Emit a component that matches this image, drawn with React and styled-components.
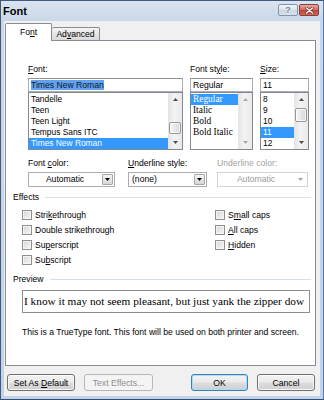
import React from 'react';
import styled, { createGlobalStyle } from 'styled-components';

const SANS = '"Liberation Sans", Arial, sans-serif';
const SERIF = '"Liberation Serif", "Times New Roman", serif';

const Global = createGlobalStyle`
  html, body { margin: 0; padding: 0; background: #ffffff; }
  body { font-family: ${SANS}; font-size: 8.6px; color: #000; }
  * { box-sizing: border-box; }
`;

const Window = styled.div`
  width: 324px;
  height: 400px;
  border: 1px solid #3d5a80;
  border-right: 1px solid #4f79b0;
  border-bottom: 1px solid #2f4f7c;
  background: linear-gradient(#dbe4ef, #c9d7e8 20px, #c3d2e5);
  display: flex;
  flex-direction: column;
  overflow: hidden;
`;

const TitleBar = styled.div`
  height: 20px;
  flex: none;
  display: flex;
  align-items: center;
  padding: 0 4px 0 2px;
`;

const Title = styled.div`
  flex: 1;
  font-weight: bold;
  font-size: 11px;
  color: #000;
  line-height: 14px;
`;

const CaptionButtons = styled.div`
  display: flex;
  gap: 1px;
  align-self: flex-start;
  margin-top: 3px;
`;

const CapBtn = styled.div`
  width: 20px;
  height: 12px;
  border-radius: 2px;
  display: flex;
  align-items: center;
  justify-content: center;
  border: 1px solid ${p => (p.$close ? '#86403a' : '#8395ac')};
  background: ${p =>
    p.$close
      ? 'linear-gradient(#e8aca3, #d36f63 45%, #c2463a 55%, #d0685b)'
      : 'linear-gradient(#f1f5f9, #dde5ee 45%, #cbd7e4 55%, #d7e1ec)'};
  color: #6f8097;
  font-weight: bold;
  font-size: 9px;
  line-height: 10px;
  text-shadow: 0 1px 0 #ffffff;
`;

const Client = styled.div`
  flex: 1;
  margin: 0 3px 3px 3px;
  background: #f0f0f0;
  display: flex;
  flex-direction: column;
  padding: 2px 0 0 1px;
`;

const TabsRow = styled.div`
  display: flex;
  align-items: flex-end;
  height: 18px;
  margin-bottom: -1px;
  position: relative;
  z-index: 1;
`;

const Tab = styled.div`
  width: ${p => p.$w}px;
  height: ${p => (p.$active ? 18 : 14)}px;
  border: 1px solid #898c95;
  border-bottom: ${p => (p.$active ? 'none' : '1px solid #898c95')};
  border-left: ${p => (p.$active ? '1px solid #898c95' : 'none')};
  background: ${p => (p.$active ? '#ffffff' : 'linear-gradient(#f4f4f4, #e6e6e6 50%, #d9d9d9)')};
  border-radius: 2px 2px 0 0;
  display: flex;
  align-items: center;
  justify-content: center;
  padding-bottom: ${p => (p.$active ? 1 : 0)}px;
  white-space: nowrap;
`;

const Panel = styled.div`
  width: 311px;
  height: 326px;
  flex: none;
  border: 1px solid #898c95;
  background: #ffffff;
  padding: 23px 4px 0 7px;
  display: flex;
  flex-direction: column;
`;

const Acc = styled.span`
  text-decoration: underline;
  text-underline-offset: 1px;
`;

const TopGrid = styled.div`
  display: flex;
  gap: 7px;
  margin-left: 15px;
`;

const Col = styled.div`
  width: ${p => p.$w}px;
  flex: none;
  display: flex;
  flex-direction: column;
`;

const Label = styled.div`
  height: 11px;
  line-height: 11px;
  margin-bottom: 3px;
  white-space: nowrap;
  color: ${p => (p.$disabled ? '#a3a3a3' : '#000')};
`;

const TextInput = styled.div`
  height: 14px;
  border: 1px solid #abadb3;
  border-top-color: #8f939b;
  background: #fff;
  line-height: 12px;
  padding-left: 2px;
  white-space: nowrap;
  overflow: hidden;
`;

const Sel = styled.span`
  background: #62a2ec;
  color: #0c1736;
`;

const ListBox = styled.div`
  height: 58px;
  border: 1px solid #828790;
  background: #fff;
  display: flex;
`;

const Items = styled.div`
  flex: 1;
  min-width: 0;
  padding-top: 1px;
  overflow: hidden;
`;

const Item = styled.div`
  height: 11px;
  line-height: 11px;
  padding-left: 2px;
  white-space: nowrap;
  font-family: ${p => (p.$serif ? SERIF : SANS)};
  font-size: ${p => (p.$serif ? '9.4px' : '8.4px')};
  background: ${p => (p.$sel ? '#3399ff' : 'transparent')};
  color: ${p => (p.$sel ? '#ffffff' : '#000')};
`;

const ScrollBar = styled.div`
  width: 14px;
  flex: none;
  display: flex;
  flex-direction: column;
  background: linear-gradient(to right, #e3e3e3, #f3f3f3 45%, #e9e9e9);
`;

const ArrowBtn = styled.div`
  height: 13px;
  flex: none;
  display: flex;
  align-items: center;
  justify-content: center;
`;

const Track = styled.div`
  flex: 1;
  display: flex;
  flex-direction: column;
`;

const Thumb = styled.div`
  margin: ${p => p.$top}px 1px 0 1px;
  height: ${p => p.$h}px;
  border: 1px solid #979797;
  border-radius: 2px;
  background: linear-gradient(to right, #f6f6f6, #e6e6e6 50%, #d8d8d8);
  box-shadow: inset 0 0 0 1px rgba(255, 255, 255, 0.7);
`;

const Row2 = styled.div`
  display: flex;
  margin: 8px 0 0 15px;
`;

const ComboCol = styled.div`
  width: ${p => p.$w}px;
  margin-right: ${p => p.$mr || 0}px;
  flex: none;
  display: flex;
  flex-direction: column;
`;

const Combo = styled.div`
  height: 15px;
  border: 1px solid ${p => (p.$disabled ? '#d4d4d4' : '#abadb3')};
  background: #fff;
  display: flex;
`;

const ComboText = styled.div`
  flex: 1;
  line-height: 13px;
  text-align: ${p => (p.$center ? 'center' : 'left')};
  padding-left: ${p => (p.$center ? 0 : 3)}px;
  color: ${p => (p.$disabled ? '#9a9a9a' : '#000')};
  white-space: nowrap;
`;

const DropBtn = styled.div`
  width: 11px;
  margin: 1px;
  flex: none;
  border: 1px solid ${p => (p.$disabled ? 'transparent' : '#a7a7a7')};
  border-radius: 1px;
  background: ${p => (p.$disabled ? 'transparent' : 'linear-gradient(#f5f5f5, #e4e4e4 50%, #d6d6d6)')};
  display: flex;
  align-items: center;
  justify-content: center;
`;

const GroupHead = styled.div`
  display: flex;
  align-items: center;
  height: 11px;
  line-height: 11px;
  margin-top: ${p => p.$mt}px;
`;

const Rule = styled.div`
  flex: 1;
  height: 1px;
  background: #d5dfe5;
  margin-left: 6px;
`;

const Checks = styled.div`
  display: flex;
  margin: 4px 0 0 9px;
`;

const CheckCol = styled.div`
  width: ${p => (p.$w ? `${p.$w}px` : 'auto')};
  flex: none;
  display: flex;
  flex-direction: column;
`;

const CheckRow = styled.div`
  height: 15px;
  display: flex;
  align-items: center;
  gap: 3px;
  white-space: nowrap;
`;

const CheckBox = styled.div`
  width: 10px;
  height: 10px;
  flex: none;
  border: 1px solid #8f8f8f;
  background: linear-gradient(135deg, #d3d6da, #f7f7f7);
  box-shadow: inset 0 0 0 1px #f4f4f4;
`;

const PreviewBox = styled.div`
  width: 288px;
  height: 23px;
  margin: 5px 0 0 9px;
  border: 1px solid #8d8d8d;
  background: #fff;
  overflow: hidden;
  white-space: nowrap;
  font-family: ${SERIF};
  font-size: 11.3px;
  line-height: 21px;
  padding-left: 1px;
`;

const Info = styled.div`
  margin: 14px 0 0 9px;
  height: 11px;
  line-height: 11px;
  white-space: nowrap;
`;

const ButtonRow = styled.div`
  display: flex;
  margin-top: 8px;
  padding-left: 2px;
`;

const Btn = styled.div`
  width: ${p => p.$w}px;
  margin-left: ${p => p.$ml}px;
  height: 17px;
  flex: none;
  border: 1px solid ${p => (p.$disabled ? '#b5b8ba' : p.$default ? '#3c7fb1' : '#707070')};
  border-radius: 3px;
  background: ${p =>
    p.$disabled ? '#f4f4f4' : 'linear-gradient(#f2f2f2, #ebebeb 48%, #dddddd 52%, #cfcfcf)'};
  box-shadow: inset 0 0 0 1px ${p => (p.$default ? '#a8dcf7' : p.$disabled ? 'transparent' : 'rgba(255,255,255,0.8)')};
  color: ${p => (p.$disabled ? '#8d8d8d' : '#000')};
  display: flex;
  align-items: center;
  justify-content: center;
  white-space: nowrap;
`;

const Arrow = ({ up, color = '#000', w = 5, h = 3 }) => (
  <svg width={w} height={h} viewBox={`0 0 ${w} ${h}`}>
    <path d={up ? `M0 ${h} L${w / 2} 0 L${w} ${h} Z` : `M0 0 L${w} 0 L${w / 2} ${h} Z`} fill={color} />
  </svg>
);

const Scroll = ({ thumb, disabled }) => (
  <ScrollBar>
    <ArrowBtn>
      <Arrow up color={disabled ? '#a9a9a9' : '#4a4a4a'} />
    </ArrowBtn>
    <Track>{thumb && <Thumb $top={thumb[0]} $h={thumb[1]} />}</Track>
    <ArrowBtn>
      <Arrow color={disabled ? '#a9a9a9' : '#4a4a4a'} />
    </ArrowBtn>
  </ScrollBar>
);

const fonts = ['Tandelle', 'Teen', 'Teen Light', 'Tempus Sans ITC', 'Times New Roman'];
const styles = ['Regular', 'Italic', 'Bold', 'Bold Italic'];
const sizes = ['8', '9', '10', '11', '12'];

export default function App() {
  return (
    <>
      <Global />
      <Window>
        <TitleBar>
          <Title>Font</Title>
          <CaptionButtons>
            <CapBtn>?</CapBtn>
            <CapBtn $close>
              <svg width="9" height="7" viewBox="0 0 9 7">
                <path d="M1.5 1 L7.5 6 M7.5 1 L1.5 6" stroke="#6b2a24" strokeWidth="2.6" strokeLinecap="round" />
                <path d="M1.5 1 L7.5 6 M7.5 1 L1.5 6" stroke="#ffffff" strokeWidth="1.4" strokeLinecap="round" />
              </svg>
            </CapBtn>
          </CaptionButtons>
        </TitleBar>
        <Client>
          <TabsRow>
            <Tab $active $w={47}>
              <span>
                Fo<Acc>n</Acc>t
              </span>
            </Tab>
            <Tab $w={48}>
              <span>
                Ad<Acc>v</Acc>anced
              </span>
            </Tab>
          </TabsRow>
          <Panel>
            <TopGrid>
              <Col $w={155}>
                <Label>
                  <Acc>F</Acc>ont:
                </Label>
                <TextInput>
                  <Sel>Times New Roman</Sel>
                </TextInput>
                <ListBox>
                  <Items>
                    {fonts.map(f => (
                      <Item key={f} $sel={f === 'Times New Roman'}>
                        {f}
                      </Item>
                    ))}
                  </Items>
                  <Scroll thumb={[16, 12]} />
                </ListBox>
              </Col>
              <Col $w={63}>
                <Label>
                  Font st<Acc>y</Acc>le:
                </Label>
                <TextInput>Regular</TextInput>
                <ListBox>
                  <Items>
                    {styles.map(s => (
                      <Item key={s} $serif $sel={s === 'Regular'}>
                        {s}
                      </Item>
                    ))}
                  </Items>
                  <Scroll disabled />
                </ListBox>
              </Col>
              <Col $w={49}>
                <Label>
                  <Acc>S</Acc>ize:
                </Label>
                <TextInput>11</TextInput>
                <ListBox>
                  <Items>
                    {sizes.map(s => (
                      <Item key={s} $sel={s === '11'}>
                        {s}
                      </Item>
                    ))}
                  </Items>
                  <Scroll thumb={[2, 14]} />
                </ListBox>
              </Col>
            </TopGrid>

            <Row2>
              <ComboCol $w={87} $mr={13}>
                <Label>
                  Font <Acc>c</Acc>olor:
                </Label>
                <Combo>
                  <ComboText $center>Automatic</ComboText>
                  <DropBtn>
                    <Arrow />
                  </DropBtn>
                </Combo>
              </ComboCol>
              <ComboCol $w={79} $mr={10}>
                <Label>
                  <Acc>U</Acc>nderline style:
                </Label>
                <Combo>
                  <ComboText>(none)</ComboText>
                  <DropBtn>
                    <Arrow />
                  </DropBtn>
                </Combo>
              </ComboCol>
              <ComboCol $w={91}>
                <Label $disabled>Underline color:</Label>
                <Combo $disabled>
                  <ComboText $center $disabled>
                    Automatic
                  </ComboText>
                  <DropBtn $disabled>
                    <Arrow color="#a5a5a5" />
                  </DropBtn>
                </Combo>
              </ComboCol>
            </Row2>

            <GroupHead $mt={5}>
              <span>Effects</span>
              <Rule />
            </GroupHead>
            <Checks>
              <CheckCol $w={193}>
                <CheckRow>
                  <CheckBox />
                  <span>
                    Stri<Acc>k</Acc>ethrough
                  </span>
                </CheckRow>
                <CheckRow>
                  <CheckBox />
                  <span>Double strikethrough</span>
                </CheckRow>
                <CheckRow>
                  <CheckBox />
                  <span>
                    Su<Acc>p</Acc>erscript
                  </span>
                </CheckRow>
                <CheckRow>
                  <CheckBox />
                  <span>
                    Su<Acc>b</Acc>script
                  </span>
                </CheckRow>
              </CheckCol>
              <CheckCol>
                <CheckRow>
                  <CheckBox />
                  <span>
                    S<Acc>m</Acc>all caps
                  </span>
                </CheckRow>
                <CheckRow>
                  <CheckBox />
                  <span>
                    <Acc>A</Acc>ll caps
                  </span>
                </CheckRow>
                <CheckRow>
                  <CheckBox />
                  <span>
                    <Acc>H</Acc>idden
                  </span>
                </CheckRow>
              </CheckCol>
            </Checks>

            <GroupHead $mt={7}>
              <span>Preview</span>
              <Rule />
            </GroupHead>
            <PreviewBox>I know it may not seem pleasant, but just yank the zipper dow</PreviewBox>
            <Info>This is a TrueType font. This font will be used on both printer and screen.</Info>
          </Panel>
          <ButtonRow>
            <Btn $w={68} $ml={0}>
              <span>
                Set As <Acc>D</Acc>efault
              </span>
            </Btn>
            <Btn $w={69} $ml={9} $disabled>
              <span>Text Effects...</span>
            </Btn>
            <Btn $w={57} $ml={38} $default>
              <span>OK</span>
            </Btn>
            <Btn $w={58} $ml={9}>
              <span>Cancel</span>
            </Btn>
          </ButtonRow>
        </Client>
      </Window>
    </>
  );
}
